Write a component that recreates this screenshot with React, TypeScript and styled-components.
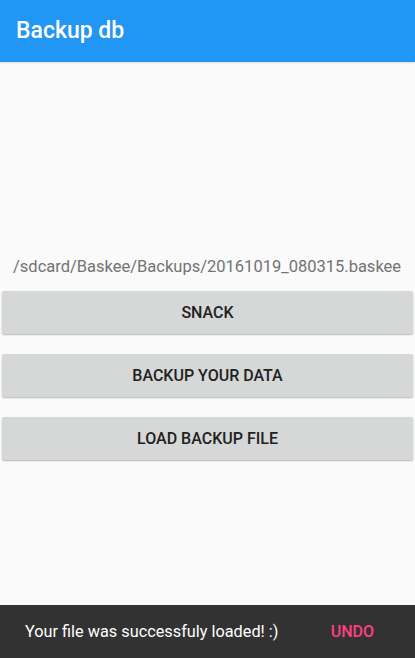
import React from "react";
import styled, { createGlobalStyle } from "styled-components";

const Global = createGlobalStyle`
  html, body { margin: 0; padding: 0; background: #fafafa; }
  body { font-family: Roboto, "Noto Sans", sans-serif; -webkit-font-smoothing: antialiased; }
  * { box-sizing: border-box; }
`;

const Screen = styled.div`
  position: relative;
  width: 415px;
  height: 658px;
  background: #fafafa;
  overflow: hidden;
  display: flex;
  flex-direction: column;
`;

const AppBar = styled.header`
  height: 62px;
  background: #2196f3;
  display: flex;
  align-items: center;
  padding: 0 16px 1px;
  box-shadow: 0 1px 2px rgba(0, 0, 0, 0.12);
  flex-shrink: 0;
`;

const Title = styled.h1`
  margin: 0;
  color: #ffffff;
  font-size: 23px;
  font-weight: 500;
  letter-spacing: 0;
`;

const Content = styled.main`
  display: flex;
  flex-direction: column;
  padding: 194px 2px 0;
`;

const PathText = styled.p`
  margin: 0 0 13px;
  padding-left: 11px;
  color: #737373;
  font-size: 16.5px;
  line-height: 22px;
  white-space: nowrap;
`;

const ButtonList = styled.div`
  display: flex;
  flex-direction: column;
  gap: 20px;
`;

const Button = styled.button`
  height: 43px;
  width: 411px;
  border: none;
  border-radius: 2px;
  background: #d6d7d7;
  color: #212121;
  font-family: Roboto, "Noto Sans", sans-serif;
  font-size: 16px;
  font-weight: 500;
  text-transform: uppercase;
  box-shadow: 0 1px 2px rgba(0, 0, 0, 0.2), 0 1px 1px rgba(0, 0, 0, 0.08);
  cursor: pointer;
`;

const Snackbar = styled.div`
  position: absolute;
  left: 0;
  right: 0;
  bottom: 0;
  height: 53px;
  background: #323232;
  display: flex;
  align-items: center;
  padding: 0 25px;
`;

const SnackText = styled.span`
  flex: 1;
  color: #ffffff;
  font-size: 16.3px;
`;

const SnackAction = styled.span`
  color: #ff4081;
  font-size: 16px;
  font-weight: 500;
  margin-right: 16px;
`;

export default function App() {
  return (
    <>
      <Global />
      <Screen>
        <AppBar>
          <Title>Backup db</Title>
        </AppBar>
        <Content>
          <PathText>/sdcard/Baskee/Backups/20161019_080315.baskee</PathText>
          <ButtonList>
            <Button>Snack</Button>
            <Button>Backup your data</Button>
            <Button>Load backup file</Button>
          </ButtonList>
        </Content>
        <Snackbar>
          <SnackText>Your file was successfuly loaded! :)</SnackText>
          <SnackAction>UNDO</SnackAction>
        </Snackbar>
      </Screen>
    </>
  );
}
